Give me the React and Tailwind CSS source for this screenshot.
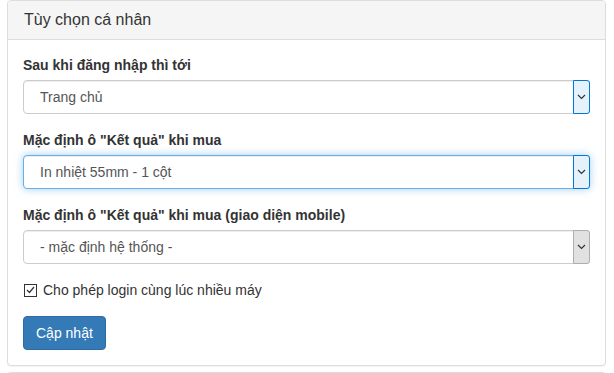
import React from "react";

function Chevron({ color = "#333" }) {
  return (
    <svg width="9" height="6" viewBox="0 0 9 6" fill="none">
      <path d="M1 1l3.5 3.5L8 1" stroke={color} strokeWidth="1.2" />
    </svg>
  );
}

function FakeSelect({ value, focused, disabledArrow }) {
  const box = focused
    ? "border-[#66afe9] shadow-[inset_0_1px_1px_rgba(0,0,0,0.075),0_0_8px_rgba(102,175,233,0.6)]"
    : "border-[#ccc] shadow-[inset_0_1px_1px_rgba(0,0,0,0.075)]";
  const arrow = disabledArrow
    ? "bg-[#e1e1e1] border-[#adadad]"
    : "bg-[#e5f1fb] border-[#0078d7]";
  return (
    <div className={`flex h-[34px] w-full items-stretch rounded border bg-white ${box}`}>
      <div className="flex flex-1 items-center pl-[16px] text-[14px] text-[#555]">{value}</div>
      <div className={`flex w-[17px] items-center justify-center rounded-r-[3px] border ${arrow} -my-px -mr-px`}>
        <Chevron />
      </div>
    </div>
  );
}

export default function App() {
  const font = { fontFamily: '"Liberation Sans", Arial, sans-serif' };
  return (
    <div className="min-h-[373px] bg-white px-[7px] pr-[8px]" style={font}>
      <div className="rounded border border-[#ddd] bg-white shadow-[0_1px_1px_rgba(0,0,0,0.05)]">
        <div className="rounded-t-[3px] border-b border-[#ddd] bg-[#f5f5f5] px-[16px] py-[9px] text-[16px] leading-[20px] text-[#333]">
          Tùy chọn cá nhân
        </div>
        <div className="p-[15px] text-[14px] leading-[20px] text-[#333]">
          <div className="mb-[16px]">
            <label className="mb-[5px] block font-bold">Sau khi đăng nhập thì tới</label>
            <FakeSelect value="Trang chủ" />
          </div>
          <div className="mb-[16px]">
            <label className="mb-[5px] block font-bold">Mặc định ô "Kết quả" khi mua</label>
            <FakeSelect value="In nhiệt 55mm - 1 cột" focused />
          </div>
          <div className="mb-[16px]">
            <label className="mb-[5px] block font-bold">Mặc định ô "Kết quả" khi mua (giao diện mobile)</label>
            <FakeSelect value="- mặc định hệ thống -" disabledArrow />
          </div>
          <div className="mt-[10px] mb-[16px] flex items-center gap-[6px] pl-px">
            <span className="flex h-[13px] w-[13px] items-center justify-center border border-[#333] bg-white">
              <svg width="9" height="8" viewBox="0 0 9 8" fill="none">
                <path d="M1 4l2.5 2.5L8 1" stroke="#333" strokeWidth="1.2" />
              </svg>
            </span>
            <span>Cho phép login cùng lúc nhiều máy</span>
          </div>
          <button className="h-[34px] rounded border border-[#2e6da4] bg-[#337ab7] px-[12px] text-[14px] text-white">
            Cập nhật
          </button>
        </div>
      </div>
      <div className="mt-[6px] h-[10px] rounded-t border border-b-0 border-[#ddd] bg-[#f5f5f5]" />
    </div>
  );
}
